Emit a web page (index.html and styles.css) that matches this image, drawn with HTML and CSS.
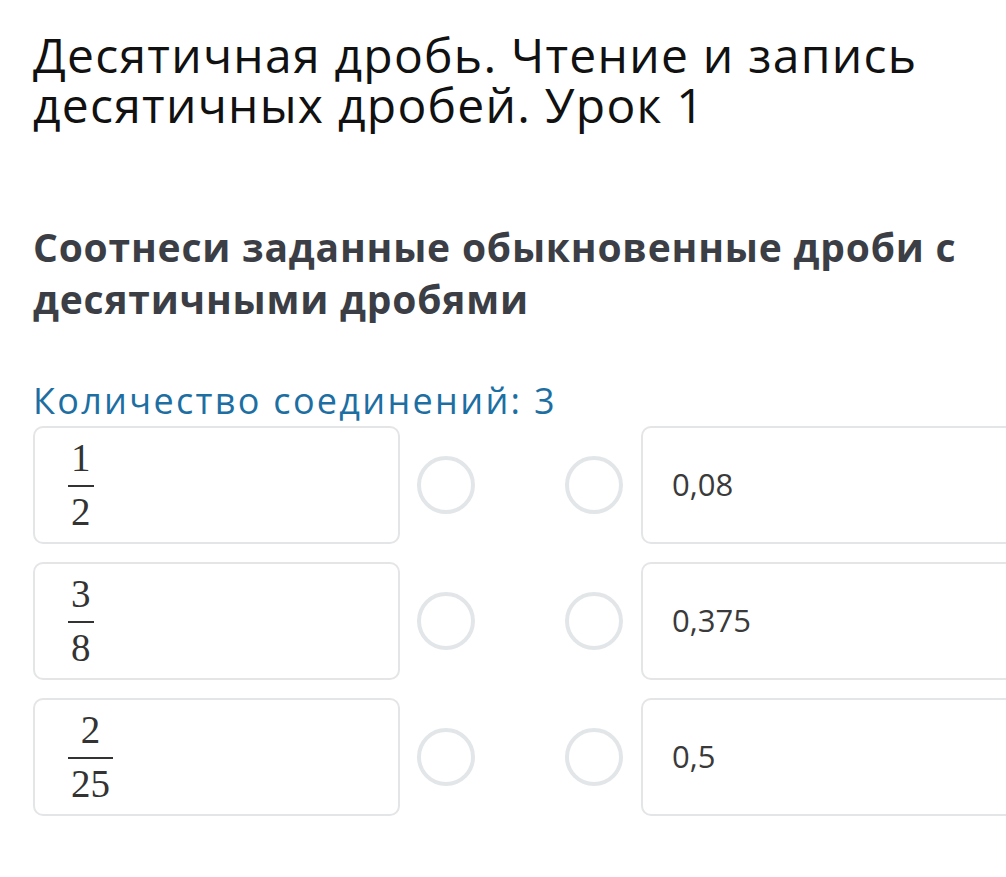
FILE: index.html
```html
<!DOCTYPE html>
<html lang="ru">
<head>
<meta charset="utf-8">
<link rel="stylesheet" href="styles.css">
</head>
<body>
<main class="page">
  <h1 class="title">Десятичная дробь. Чтение и запись десятичных дробей. Урок 1</h1>
  <h2 class="task">Соотнеси заданные обыкновенные дроби с десятичными дробями</h2>
  <p class="count">Количество соединений: 3</p>
  <div class="rows">
    <div class="row">
      <div class="card left"><span class="frac"><span class="num">1</span><span class="den">2</span></span></div>
      <span class="dot"></span><span class="dot second"></span>
      <div class="card right"><span class="val">0,08</span></div>
    </div>
    <div class="row">
      <div class="card left"><span class="frac"><span class="num">3</span><span class="den">8</span></span></div>
      <span class="dot"></span><span class="dot second"></span>
      <div class="card right"><span class="val">0,375</span></div>
    </div>
    <div class="row">
      <div class="card left"><span class="frac"><span class="num">2</span><span class="den">25</span></span></div>
      <span class="dot"></span><span class="dot second"></span>
      <div class="card right"><span class="val">0,5</span></div>
    </div>
  </div>
</main>
</body>
</html>
```
FILE: styles.css
```css
html, body {
  margin: 0;
  padding: 0;
  background: #fff;
  overflow: hidden;
}
.page {
  font-family: "Open Sans", "Liberation Sans", sans-serif;
  padding: 30px 0 0 33px;
  width: 1100px;
}
.title {
  margin: 0;
  font-weight: 400;
  font-size: 48px;
  line-height: 50px;
  letter-spacing: 1.25px;
  color: #111;
  width: 940px;
}
.task {
  margin: 91px 0 0 0;
  font-weight: 700;
  font-size: 39px;
  line-height: 52px;
  letter-spacing: 0.8px;
  color: #3b3e45;
  width: 960px;
}
.count {
  margin: 54px 0 0 0;
  font-size: 36px;
  line-height: 44px;
  letter-spacing: 2.3px;
  color: #1d6fa3;
}
.rows {
  margin-top: 3px;
  display: flex;
  flex-direction: column;
  gap: 18px;
}
.row {
  display: flex;
  align-items: center;
}
.card {
  box-sizing: border-box;
  height: 118px;
  border: 2px solid #e4e5e7;
  border-radius: 10px;
  display: flex;
  align-items: center;
}
.left {
  width: 367px;
  padding-left: 33px;
}
.right {
  width: 400px;
  padding-left: 29px;
  margin-left: 18px;
}
.dot {
  box-sizing: border-box;
  width: 58px;
  height: 58px;
  border: 4px solid #e3e6e9;
  border-radius: 50%;
  margin-left: 17px;
}
.dot.second {
  margin-left: 90px;
}
.frac {
  display: inline-flex;
  flex-direction: column;
  align-items: center;
  font-family: "Liberation Serif", "DejaVu Serif", serif;
  font-size: 39px;
  line-height: 40px;
  color: #333;
}
.num {
  padding: 0 3px 7px;
}
.den {
  border-top: 2px solid #333;
  padding: 5px 3px 0;
  align-self: stretch;
  text-align: center;
}
.val {
  font-size: 31px;
  color: #3a3a3a;
  position: relative;
  top: -1px;
}
```
